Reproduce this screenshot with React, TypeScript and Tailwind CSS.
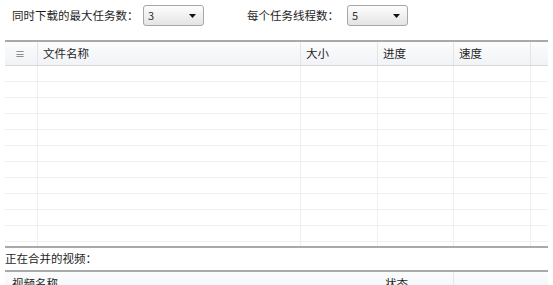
import React from "react";

const cols = "grid grid-cols-[33px_263px_77px_76px_77px_17px]";

function Combo({ value }: { value: string }) {
  return (
    <div className="flex h-[21px] w-[61px] items-center justify-between rounded-[3px] border border-[#a7a7a7] bg-gradient-to-b from-[#fdfdfd] to-[#e4e4e4] pl-[4px] pr-[7px] text-[11px] text-[#333]">
      <span>{value}</span>
      <svg width="7" height="4" viewBox="0 0 7 4">
        <path d="M0 0h7L3.5 4z" fill="#111" />
      </svg>
    </div>
  );
}

export default function App() {
  const rows = Array.from({ length: 12 });
  return (
    <div
      className="h-[285px] w-[553px] overflow-hidden bg-white text-[11.5px] text-[#1e1e1e]"
      style={{ fontFamily: '"Noto Sans CJK SC", "Microsoft YaHei", sans-serif' }}
    >
      <div className="flex h-[40px] items-start pt-[5px]">
        <div className="flex h-[21px] items-center pl-[12px]">
          <span className="w-[131px] whitespace-nowrap">同时下载的最大任务数：</span>
          <Combo value="3" />
        </div>
        <div className="ml-[43px] flex h-[21px] items-center">
          <span className="w-[100px] whitespace-nowrap">每个任务线程数：</span>
          <Combo value="5" />
        </div>
      </div>

      <div className="mx-[5px] border-t-2 border-[#a9a9a9]">
        <div className={`${cols} h-[24px] border-b border-[#d6d9de] bg-gradient-to-b from-[#fbfcfd] to-[#f1f3f6]`}>
          <div className="flex items-center justify-center border-r border-[#e3e5e8] pr-[2px] text-[10px] text-[#777]">≡</div>
          <div className="flex items-center border-r border-[#e3e5e8] pl-[5px]">文件名称</div>
          <div className="flex items-center border-r border-[#e3e5e8] pl-[5px]">大小</div>
          <div className="flex items-center border-r border-[#e3e5e8] pl-[5px]">进度</div>
          <div className="flex items-center border-r border-[#e3e5e8] pl-[5px]">速度</div>
          <div />
        </div>
        <div className="h-[180px] overflow-hidden">
          {rows.map((_, i) => (
            <div key={i} className={`${cols} h-[16px] border-b border-[#f0f0f0]`}>
              <div className="border-r border-[#efefef]" />
              <div className="border-r border-[#efefef]" />
              <div className="border-r border-[#efefef]" />
              <div className="border-r border-[#efefef]" />
              <div className="border-r border-[#efefef]" />
              <div />
            </div>
          ))}
        </div>
        <div className="border-t-2 border-[#a9a9a9]" />
      </div>

      <div className="flex h-[22px] items-center whitespace-nowrap pl-[5px]">正在合并的视频：</div>

      <div className="mx-[5px] border-t-2 border-[#a9a9a9]">
        <div className="grid h-[24px] grid-cols-[373px_76px_94px] bg-gradient-to-b from-[#fbfcfd] to-[#f1f3f6]">
          <div className="flex items-center pl-[7px]">视频名称</div>
          <div className="flex items-center border-r border-[#e3e5e8] pl-[7px]">状态</div>
          <div />
        </div>
      </div>
    </div>
  );
}
